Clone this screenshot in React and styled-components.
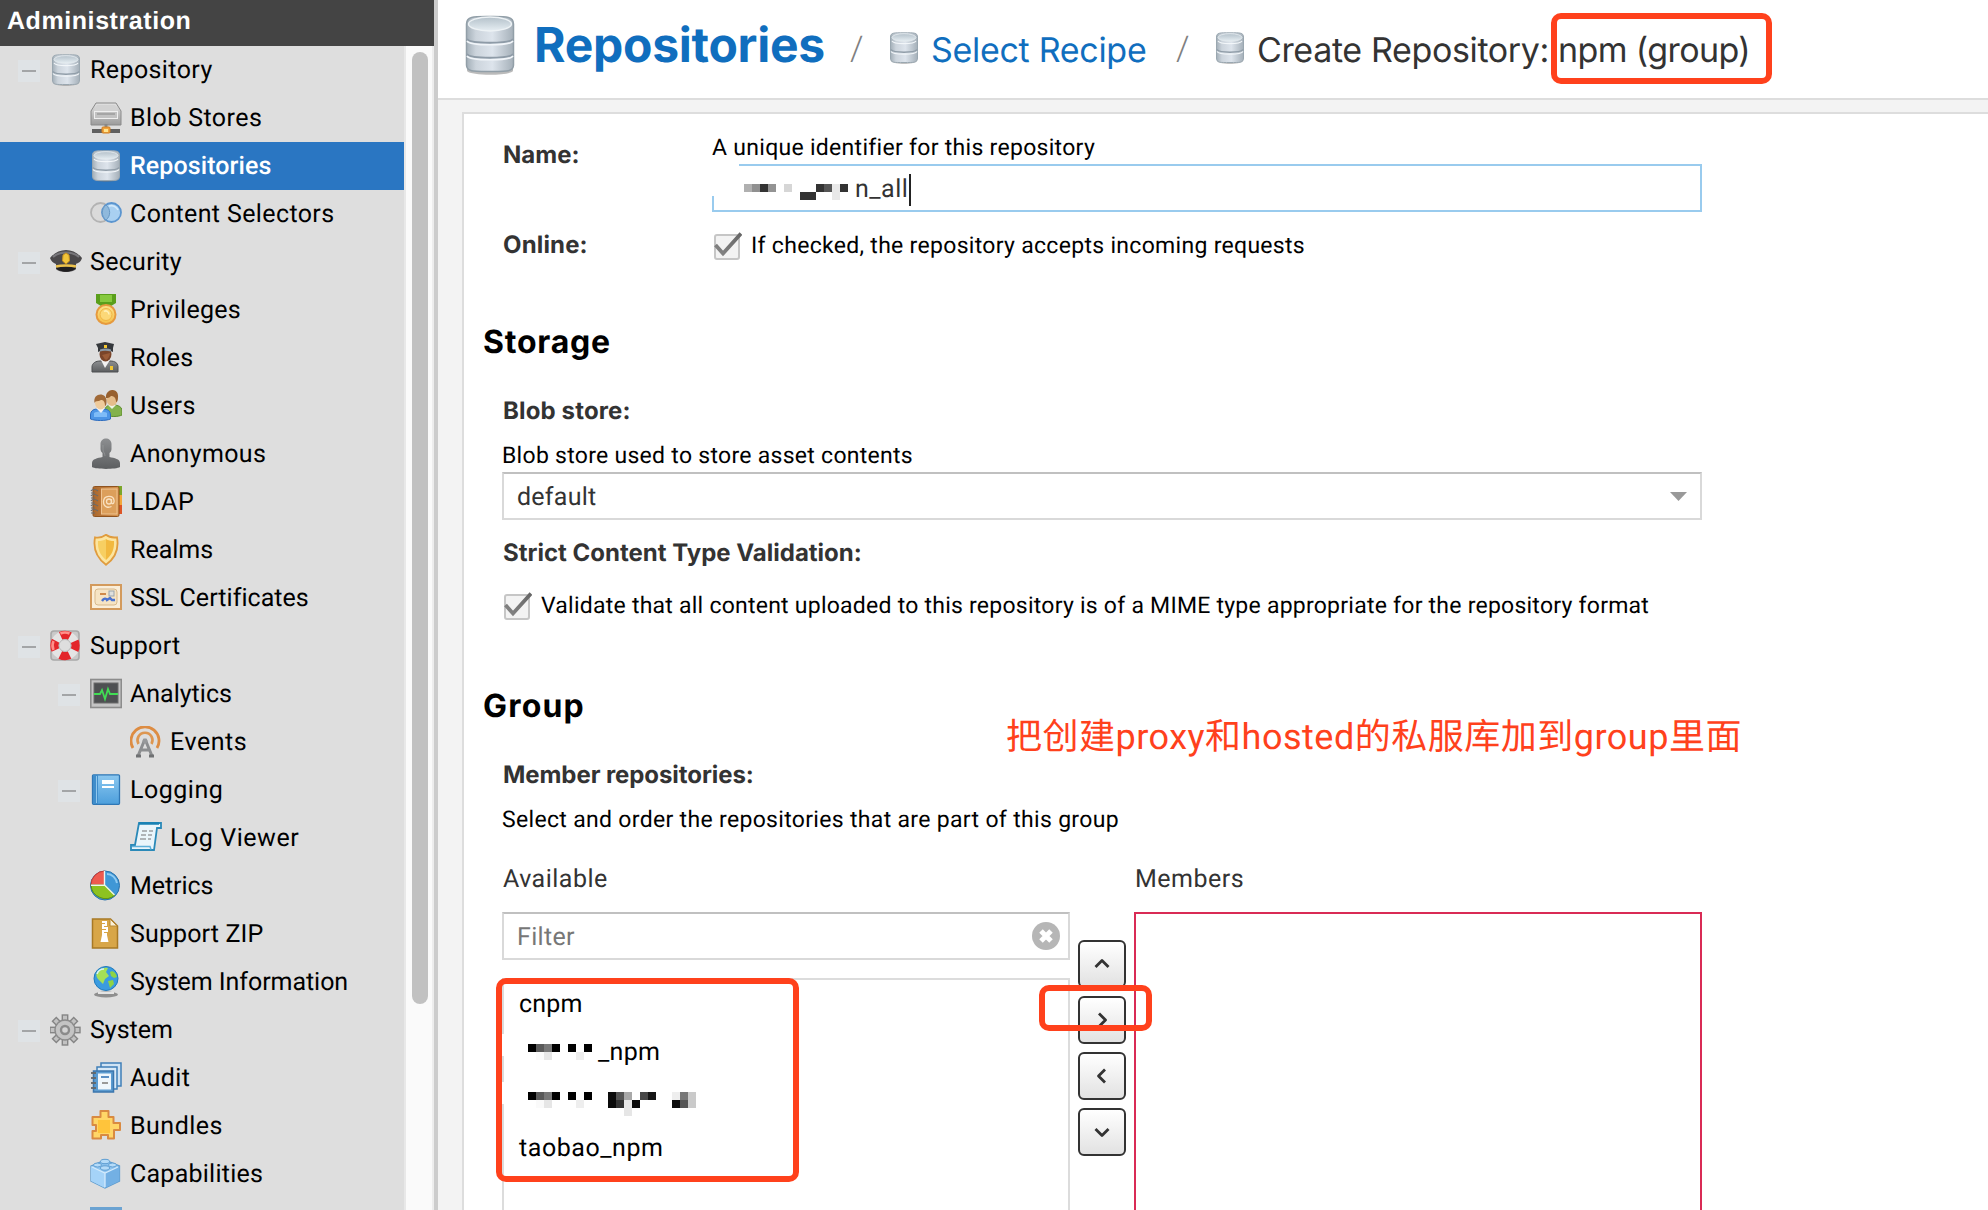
import React from "react";
import styled, { createGlobalStyle } from "styled-components";

const RED = "#ff411c";

const Global = createGlobalStyle`
  html, body { margin: 0; overflow: hidden; }
  *, *::before, *::after { box-sizing: border-box; }
  body {
    font-family: Roboto, "Noto Sans CJK SC", sans-serif;
    text-rendering: geometricPrecision;
    background: #f3f3f3;
    color: #000;
  }
`;

const Page = styled.div`
  position: relative;
  display: flex;
  width: 1988px;
  height: 1210px;
  overflow: hidden;
`;

const Sidebar = styled.nav`
  flex: none;
  width: 438px;
  display: grid;
  grid-template-rows: 46px 1fr;
  border-right: 4px solid #cccccc;
  background: #dedede;
`;
const SidebarHead = styled.header`
  background: #444444;
  color: #fff;
  padding-left: 7px;
  font: 700 25px/43px "Liberation Sans", Arial, sans-serif;
  letter-spacing: 0.57px;
`;
const SidebarBody = styled.div`
  display: flex;
  min-height: 0;
`;
const Tree = styled.ul`
  flex: 1;
  margin: 0;
  padding: 0;
  list-style: none;
  overflow: hidden;
  height: 1164px;
`;
const Node = styled.li`
  display: flex;
  align-items: center;
  height: 48px;
  padding-left: ${(p) => 10 + p.$level * 40}px;
  background: ${(p) => (p.$active ? "#2a76c2" : "transparent")};
  color: ${(p) => (p.$active ? "#fff" : "#000")};
  font-weight: ${(p) => (p.$active ? 500 : 400)};
`;
const Toggle = styled.span`
  width: 22px;
  height: 22px;
  margin: 2px 10px 0 8px;
  display: grid;
  place-items: center;
  background: ${(p) => (p.$open ? "#dfe3e6" : "transparent")};
  &::after {
    content: "";
    width: 14px;
    height: 2px;
    background: ${(p) => (p.$open ? "#a3a5a7" : "transparent")};
  }
`;
const NodeLabel = styled.span`
  margin-left: 8px;
  padding-top: 1px;
  font-size: 25px;
  line-height: 47px;
  letter-spacing: ${(p) => p.$ls}px;
  white-space: nowrap;
`;
const Track = styled.div`
  width: 30px;
  padding: 6px 6px 0;
  background: #fafafa;
  border-left: 2px solid #e8e8e8;
  border-right: 2px solid #ededed;
`;
const Thumb = styled.div`
  width: 16px;
  height: 952px;
  border-radius: 8px;
  background: #c1c1c1;
`;

const Main = styled.main`
  flex: 1;
  min-width: 0;
  display: flex;
  flex-direction: column;
`;
const Crumbs = styled.header`
  flex: none;
  display: flex;
  align-items: flex-start;
  height: 100px;
  padding-left: 20px;
  background: #fff;
  border-bottom: 2px solid #dddddd;
`;
const CrumbIcon = styled.span`
  display: flex;
  margin: ${(p) => (p.$large ? "12px 12px 0 0" : "32px 11px 0 0")};
`;
const Title = styled.h1`
  flex: none;
  width: 316px;
  margin: 13px 0 0;
  color: #106ebe;
  font: 700 48px/64px Inter, sans-serif;
  letter-spacing: -0.26px;
`;
const Slash = styled.span`
  width: 38px;
  margin-top: 25px;
  color: #808080;
  font-size: 34px;
  font-weight: 300;
  line-height: 48px;
`;
const Crumb = styled.span`
  flex: none;
  width: ${(p) => p.$width}px;
  margin-top: 27px;
  color: ${(p) => (p.$link ? "#106ebe" : "#333333")};
  font: 400 34px/48px Inter, sans-serif;
  letter-spacing: ${(p) => p.$ls}px;
  white-space: nowrap;
`;

const Panel = styled.section`
  flex: 1;
  min-height: 0;
  margin: 12px 0 0 24px;
  padding: 20px 0 0 20px;
  background: #fff;
  border: 2px solid #dddddd;
  border-width: 2px 0 0 2px;
`;
const Fields = styled.div`
  display: flow-root;
  width: 1218px;
  padding-left: 18px;
`;
const InlineField = styled.div`
  display: grid;
  grid-template-columns: 210px 1fr;
  align-items: start;
  margin-bottom: 20px;
`;
const Label = styled.div`
  color: #333333;
  font: 700 24px/${(p) => p.$lh || 32}px Inter, sans-serif;
  letter-spacing: ${(p) => p.$ls}px;
  margin-top: ${(p) => p.$mt || 0}px;
  padding-left: 1px;
`;
const Help = styled.div`
  margin: ${(p) => p.$mt || 0}px 0 2px;
  font-size: 23px;
  line-height: 28px;
  letter-spacing: ${(p) => p.$ls}px;
  white-space: nowrap;
`;
const Section = styled.h2`
  margin: ${(p) => p.$mt}px 0 33px -1px;
  font: 700 32px/40px Inter, sans-serif;
  letter-spacing: ${(p) => p.$ls}px;
`;
const Box = styled.div`
  display: flex;
  align-items: center;
  justify-content: space-between;
  height: 48px;
  padding: 0 ${(p) => p.$pr || 12}px 0 13px;
  border: 2px solid #d9d9d9;
  border-top-color: #c0c0c0;
  background: #fff;
  color: #333333;
  font-size: 25px;
`;
const BoxText = styled.span`
  padding-top: 3px;
  color: ${(p) => (p.$muted ? "#777777" : "inherit")};
  letter-spacing: ${(p) => p.$ls}px;
`;
const NameBox = styled(Box)`
  position: relative;
  justify-content: flex-start;
  padding-left: 30px;
  border-color: #99cbee;
  &::before {
    content: "";
    position: absolute;
    left: -2px;
    top: -2px;
    width: 27px;
    height: 32px;
    background: #fff;
  }
`;
const Typed = styled.span`
  margin: 4px 0 0 7px;
  padding-right: 1px;
  line-height: 32px;
  letter-spacing: 0.5px;
  border-right: 2px solid #222;
`;
const CheckRow = styled.div`
  display: flex;
  align-items: flex-start;
  gap: 9px;
  margin-top: ${(p) => p.$mt || 0}px;
  height: 28px;
`;

const Picker = styled.div`
  display: grid;
  grid-template-columns: 568px 48px 568px;
  column-gap: 8px;
  margin-top: 30px;
`;
const Column = styled.div`
  display: flex;
  flex-direction: column;
`;
const ColumnHead = styled.div`
  margin-bottom: 16px;
  padding-left: 1px;
  color: #333333;
  font-size: 25px;
  line-height: 32px;
  letter-spacing: ${(p) => p.$ls}px;
`;
const List = styled.div`
  height: ${(p) => p.$height}px;
  margin-top: ${(p) => p.$mt || 0}px;
  border: 2px solid ${(p) => p.$border};
  border-bottom: 0;
`;
const Item = styled.div`
  position: relative;
  display: flex;
  align-items: center;
  height: 48px;
  padding-left: 15px;
  font-size: 25px;
  letter-spacing: ${(p) => p.$ls}px;
  &::before {
    content: "";
    display: ${(p) => (p.$masked ? "block" : "none")};
    position: absolute;
    left: -2px;
    top: 6px;
    width: 2px;
    height: 22px;
    background: #fff;
  }
`;
const MaskedOwner = styled.span`
  display: flex;
  margin: 0 6px 0 9px;
`;
const MoveButtons = styled.div`
  display: flex;
  flex-direction: column;
  gap: 8px;
  padding-top: 76px;
`;
const MoveButton = styled.button`
  display: grid;
  place-items: center;
  width: 48px;
  height: 48px;
  padding: 0;
  border: 2px solid #333333;
  border-radius: 6px;
  background: linear-gradient(#ffffff, #e2e2e2);
`;

const Marker = styled.div`
  position: absolute;
  left: ${(p) => p.$x}px;
  top: ${(p) => p.$y}px;
  width: ${(p) => p.$w}px;
  height: ${(p) => p.$h}px;
  border: 6px solid ${RED};
  border-radius: 10px;
`;
const Note = styled.div`
  position: absolute;
  left: 1006px;
  top: 712px;
  color: ${RED};
  font-size: 36px;
  line-height: 50px;
  letter-spacing: 0.5px;
  white-space: nowrap;
`;

/* ---------- icons, all on a 32 unit grid ---------- */
const Svg = ({ size = 32, children }) => (
  <svg width={size} height={size} viewBox="0 0 32 32" fill="none">{children}</svg>
);
const Defs = () => (
  <svg width="0" height="0" aria-hidden="true" display="block">
    <defs>
      <linearGradient id="steel"><stop offset="0" stopColor="#a3afb8" /><stop offset=".2" stopColor="#ccd4dc" /><stop offset=".55" stopColor="#dde4ec" /><stop offset="1" stopColor="#a5b0b9" /></linearGradient>
      <linearGradient id="steelTop" x2="0" y2="1"><stop offset="0" stopColor="#b4c1ca" /><stop offset="1" stopColor="#e6eef3" /></linearGradient>
      <linearGradient id="grey" x2="0" y2="1"><stop offset="0" stopColor="#e2e2e2" /><stop offset="1" stopColor="#9b9b9b" /></linearGradient>
      <linearGradient id="dark" x2="0" y2="1"><stop offset="0" stopColor="#8d8f91" /><stop offset="1" stopColor="#5c5e60" /></linearGradient>
      <linearGradient id="gold" x2="0" y2="1"><stop offset="0" stopColor="#fde28a" /><stop offset="1" stopColor="#f5c04a" /></linearGradient>
      <linearGradient id="blue" x2="0" y2="1"><stop offset="0" stopColor="#8cc8f0" /><stop offset="1" stopColor="#4d9fdc" /></linearGradient>
      <linearGradient id="brown"><stop offset="0" stopColor="#a9662c" /><stop offset="1" stopColor="#d8964f" /></linearGradient>
      <linearGradient id="tick" x1="1" x2="0" y2="1"><stop offset="0" stopColor="#666" /><stop offset="1" stopColor="#858585" /></linearGradient>
    </defs>
  </svg>
);
const Database = ({ size }) => (
  <Svg size={size}>
    <path d="M3 27c2 5 24 5 26 0v2c-3 4-23 4-26 0z" fill="#777" opacity=".45" />
    <path d="M2.500 5C2.500 .5 6 .8 16 .8S29.500 .5 29.500 5V26C29.500 31 26 30.500 16 30.500S2.500 31 2.500 26Z" fill="url(#steel)" stroke="#9aa7b0" />
    <path d="M3 17.500c2 3.500 24 3.500 26 0" stroke="#8f9ca7" strokeWidth="1.500" />
    <path d="M3 19.500c2 3.500 24 3.500 26 0" stroke="#f2f6f9" strokeWidth="1.200" />
    <path d="M4 9c2 3.500 22 3.500 24 0" stroke="#f2f6f9" strokeWidth="1.200" />
    <ellipse cx="16" cy="5.500" rx="12" ry="3.800" fill="url(#steelTop)" stroke="#e3eaee" strokeWidth=".8" />
  </Svg>
);
const BigDatabase = () => (
  <svg width="64" height="64" viewBox="0 0 64 64" fill="none">
    <path d="M9 55c3 6 43 6 46 0v4c-4 5-42 5-46 0z" fill="#555" opacity=".4" />
    <path d="M8.500 12C8.500 4 16 4.500 32 4.500S55.500 4 55.500 12V53C55.500 60 48 59.500 32 59.500S8.500 60 8.500 53Z" fill="url(#steel)" stroke="#929fa8" strokeWidth="1.500" />
    <path d="M9 27c3 5 43 5 46 0M9 42c3 5 43 5 46 0" stroke="#8e9ba7" strokeWidth="1.800" />
    <path d="M9 29c3 5 43 5 46 0M9 44c3 5 43 5 46 0" stroke="#f1f5f9" strokeWidth="1.600" />
    <ellipse cx="32" cy="12" rx="21.500" ry="7" fill="url(#steelTop)" stroke="#edf2f5" strokeWidth="1.400" />
  </svg>
);
const BlobStore = () => (
  <Svg>
    <path d="M6 1h20l5 8v14H1V9z" fill="url(#grey)" stroke="#8a8a8a" />
    <path d="M7 3h18l3.500 6h-25z" fill="#d2d2d2" />
    <rect x="4.500" y="9.500" width="23" height="7" fill="#c2c2c2" stroke="#efefef" />
    <path d="M7 12h18" stroke="#888" />
    <path d="M16 22v4" stroke="#888" strokeWidth="3" />
    <path d="M2 29h28" stroke="#606060" strokeWidth="4" />
    <rect x="12" y="25" width="8" height="6" rx="1" fill="#f0a33c" stroke="#cf7e22" />
    <rect x="14" y="27" width="4" height="3" fill="#ffe48f" />
  </Svg>
);
const Selectors = () => (
  <Svg>
    <circle cx="10.500" cy="14.500" r="9.500" fill="#dadada" stroke="#b3b3b3" strokeWidth="1.800" />
    <circle cx="21.500" cy="14.500" r="9.500" fill="#a9d0f1" stroke="#5b95cf" strokeWidth="1.800" />
    <path d="M16 7a9.500 9.500 0 0 1 0 15a9.500 9.500 0 0 1 0-15" fill="#8fb9dc" stroke="#6798c4" />
    <path d="M19 8a8 8 0 0 1 9 4" stroke="#d6ebfb" strokeWidth="1.500" />
  </Svg>
);
const Cap = () => (
  <Svg>
    <path d="M0 12C4 7 10 4 16 4s12 3 16 8c-1 4-4 5-6 6v5c-3 4-17 4-20 0v-5c-3-1-5-3-6-6z" fill="#4a484a" />
    <path d="M3 11c6-6 20-6 26 0" stroke="#77767a" strokeWidth="2" />
    <path d="M6 22c5 5 15 5 20 0-5-2-15-2-20 0z" fill="#1f1e20" />
    <path d="M6 20.500c5-1.500 15-1.500 20 0" stroke="#ecc24c" strokeWidth="2.500" />
    <path d="M13 9l3-2 3 2 .5 6-3.500 3-3.500-3z" fill="#f2c53a" stroke="#c8921e" />
  </Svg>
);
const Medal = () => (
  <Svg>
    <path d="M6 0h20v9l-5 3H11l-5-3z" fill="#5a9f1b" />
    <path d="M10 1h12v7H10z" fill="#86c93e" />
    <circle cx="16" cy="20.500" r="9.500" fill="url(#gold)" stroke="#e69a3e" strokeWidth="2" />
    <circle cx="16" cy="20.500" r="6" stroke="#f0b544" fill="#fcd878" />
    <path d="M14 17.500c2-1.500 5 0 5 3" stroke="#fff0b8" strokeWidth="1.500" />
  </Svg>
);
const Officer = () => (
  <Svg>
    <path d="M2 30v-5c0-4 4-6 8-6h10c5 0 8 2 8 6v5z" fill="url(#dark)" stroke="#4d4f51" />
    <path d="M11 18l4 8 5-8z" fill="#f2f2f2" />
    <ellipse cx="15.500" cy="12" rx="6" ry="7.500" fill="#7a4529" />
    <path d="M12 13c2 2 2 4 4 5 2-1 4-4 4-7z" fill="#9b5c37" />
    <path d="M6 2l9-2 9 2-1 4v4c-4-2-11-2-15 0V6z" fill="#35383c" />
    <path d="M10 7.500c4-1.500 8-1.500 11 0v2c-4-1-8-1-11 0z" fill="#8c9aa5" />
    <path d="M14 3h3v3h-3z" fill="#f4c62f" />
    <path d="M20 24h3v4h-3z" fill="#f0c534" />
  </Svg>
);
const Users = () => (
  <Svg>
    <path d="M15 25v-5c0-4 4-5 7-5s10 0 10 6v4c-4 2-12 2-17 0z" fill="#83b24c" stroke="#5c8d2d" />
    <path d="M18 15l4 4 4-4z" fill="#eef4e5" />
    <ellipse cx="22" cy="9" rx="5.500" ry="7" fill="#e5bd8b" />
    <path d="M16 8c-1-10 13-11 12-1 0 4-1 5-2 5 0-4-2-6-5-6-2 2-3 2-5 2z" fill="#97602f" />
    <path d="M.5 29v-4c0-5 4-6 7-6h6c4 0 7 2 7 6v4c-5 2-15 2-20 0z" fill="#4c95e6" stroke="#2c6bbd" />
    <path d="M4 23c3-2 10-2 13 0v4H4z" fill="#7ebcf8" />
    <path d="M6 18l5 5 4-5z" fill="#f4f4f4" />
    <ellipse cx="10.500" cy="13" rx="5.500" ry="6.500" fill="#efcb9c" />
    <path d="M4.500 13c-2-11 13-11 12-1 0 3-1 4-1.500 4 0-5-2-6-4-6-3 2-5 0-6.500 3z" fill="#a16a38" />
  </Svg>
);
const Silhouette = () => (
  <Svg>
    <path d="M10.500 6c0-7.500 11-7.500 11 0v5c0 2-1 3-2 4v4c5 1 10.500 2 10.500 6v4c-4 2.500-24 2.500-28 0v-4c0-4 5.500-5 10.500-6v-4c-1-1-2-2-2-4z" fill="url(#dark)" />
    <path d="M13 7v5c0 2 2 3 2 6" stroke="#a5a7a9" opacity=".5" />
  </Svg>
);
const AddressBook = () => (
  <Svg>
    <path d="M27 0h5v9h-5z" fill="#7ba629" /><path d="M27 9h5v10h-5z" fill="#f3a73a" /><path d="M27 19h5v9h-5z" fill="#dd5526" />
    <rect x="3" y=".5" width="26" height="30" rx="1.500" fill="url(#brown)" stroke="#8f531f" />
    <rect x="11.500" y="3" width="15.500" height="25" fill="#dc9f5b" stroke="#efc391" />
    <circle cx="19" cy="15.500" r="2.500" stroke="#f9e1c1" strokeWidth="1.300" />
    <path d="M21.500 13v4c2 2 3-1 2.500-3-1-5-10-5-10.500 1.500 0 6 5 6.500 8 5" stroke="#f9e1c1" strokeWidth="1.300" />
    {[4, 9, 14, 19, 24].map((y) => <path key={y} d={`M1 ${y + 1}c1-2 5-2 7 0M1 ${y + 3}h4`} stroke="#6a6a6a" strokeWidth="1.200" />)}
  </Svg>
);
const Shield = () => (
  <Svg>
    <path d="M16 .8c3 2.500 7 3 11 2.500 2 11-2 21-11 27.500C7 24 3 14 5 3.300 9 4 13 3 16 .8z" fill="#fce5a0" stroke="#e09c3e" strokeWidth="1.800" />
    <path d="M16 5c2 1.500 5 2 8 2 .5 8-2 14-8 19z" fill="#f2b93f" /><path d="M16 5C14 6.500 11 7 8 7c-.5 8 2 14 8 19z" fill="#f7cf62" />
  </Svg>
);
const Certificate = () => (
  <Svg>
    <rect x="1" y="3" width="30" height="24" fill="#faeed9" stroke="#d39a5c" strokeWidth="2" />
    <rect x="5" y="7" width="22" height="16" rx="3" fill="#f6e4c4" stroke="#d8b98c" />
    <path d="M10 12h6" stroke="#d08a4a" strokeWidth="2" />
    <rect x="19" y="9" width="5" height="5" fill="#dfe0dd" stroke="#9aa5ad" />
    <path d="M12 19c2-3 4-3 5-1l3-2 2 2h3" stroke="#4a72cf" strokeWidth="2.400" />
  </Svg>
);
const Lifebuoy = () => (
  <Svg>
    <rect x="1" y="1" width="28" height="29" rx="3" stroke="#a9a9a9" strokeWidth="1.600" fill="#c9c9c9" />
    <circle cx="15" cy="15.500" r="10.500" stroke="#e4e4e4" strokeWidth="8" />
    <circle cx="15" cy="15.500" r="10.500" stroke="#e3262b" strokeWidth="8.500" strokeDasharray="9.500 6.993" strokeDashoffset="4.750" />
    <path d="M10.500 3.500q4.500-2 9 0M3.500 11q-2 4.500 0 9" stroke="#ff8f8a" strokeWidth="2.500" />
    <circle cx="15" cy="15.500" r="6" fill="#dedede" stroke="#bbb" />
  </Svg>
);
const Monitor = () => (
  <Svg>
    <rect x=".8" y="1.500" width="30.500" height="28" fill="#c4c4c4" stroke="#8c8c8c" strokeWidth="1.600" />
    <rect x="4" y="5" width="24" height="20" fill="#4e5052" stroke="#6b6b6b" />
    <path d="M4 16h6l2-4 3 9 3-10 2 5h8" stroke="#41dd54" strokeWidth="1.800" />
  </Svg>
);
const Antenna = () => (
  <Svg>
    <path d="M3 22a14 14 0 1 1 24 0" stroke="#dd8c42" strokeWidth="2.800" />
    <path d="M8.500 18a7.500 7.500 0 1 1 13 0" stroke="#dd9650" strokeWidth="2.600" />
    <path d="M15 13l-7 17M15 13l7 17M11 24h8" stroke="#8c8e90" strokeWidth="3" />
    <path d="M6 30h5M19 30h5" stroke="#6f7173" strokeWidth="3" />
    <circle cx="15" cy="15" r="2.500" fill="#97999b" />
  </Svg>
);
const Book = () => (
  <Svg>
    <rect x="2.500" y=".8" width="27" height="29.500" rx="1" fill="url(#blue)" stroke="#2f77b5" strokeWidth="1.300" />
    <path d="M3 1h5v29H3z" fill="#3f8dcb" /><path d="M6.500 2v27" stroke="#90c8ee" />
    <path d="M12 6h12v4H12z" fill="#fff" /><path d="M12 13h12" stroke="#fff" strokeWidth="2" />
  </Svg>
);
const Scroll = () => (
  <Svg>
    <path d="M9 1h22v5h-4l-3 22H1v-5h4z" fill="#eaf5fb" stroke="#2a89b8" strokeWidth="1.800" />
    <path d="M9 1.500h20" stroke="#1982b5" strokeWidth="2.500" />
    <path d="M2 24.500h18l1 3" stroke="#5fb1da" strokeWidth="1.500" />
    <path d="M12 9h5m2 0h4M11 13h5m2 0h4M10 17h6m2 0h3" stroke="#9c9fa2" strokeWidth="1.500" />
  </Svg>
);
const Pie = () => (
  <Svg>
    <circle cx="15" cy="15.500" r="14.500" fill="#3f97d6" stroke="#2a72ab" />
    <path d="M14.500 15V1A14 14 0 0 0 1 15z" fill="#ee5a4f" stroke="#c93932" />
    <path d="M1 15h14l10 10A14.500 14.500 0 0 1 1 15z" fill="#8dc220" stroke="#5d920f" />
    <path d="M14.500 1v14l10 10M1 15.200h14" stroke="#f0f6ee" strokeWidth="1.400" />
    <path d="M17 4c5 0 9 4 10 9" stroke="#8fcbf3" strokeWidth="2" />
  </Svg>
);
const Zip = () => (
  <Svg>
    <path d="M2.500 1h18l7 7v22h-25z" fill="#d8a648" stroke="#a87924" strokeWidth="1.500" />
    <path d="M20 1v7h7z" fill="#faf0d8" stroke="#b98a38" />
    <path d="M12 4h4v3h-3v3h4v3h-4v3h4" stroke="#fff" strokeWidth="2" />
    <path d="M12.500 15h4l2 9h-8z" fill="#fff" />
  </Svg>
);
const Globe = () => (
  <Svg>
    <ellipse cx="16" cy="28.500" rx="12" ry="3" fill="#8f8f8f" /><path d="M8 27h16" stroke="#eee" strokeWidth="1.800" />
    <circle cx="16" cy="12.500" r="12" fill="#3a9be0" stroke="#1f79bb" />
    <path d="M7 6c3-4 8-5 11-4l-2 4 3 4-4 3-2 5-5-5c-2-2-2-5-1-7z" fill="#a5e056" />
    <path d="M20 6c3-2 6 1 7 5l-3 1-3-2zM18 15l5-1 1 4-4 4z" fill="#8fd444" />
    <path d="M7 8c1-3 4-5 7-5" stroke="#d5f3fb" strokeWidth="1.500" />
  </Svg>
);
const Gear = () => (
  <Svg>
    {[0, 45, 90, 135, 180, 225, 270, 315].map((a) => <rect key={a} x="12.300" y="1" width="5.400" height="7" fill="#c2c2c2" stroke="#858585" strokeWidth="1.400" transform={`rotate(${a} 15 16)`} />)}
    <circle cx="15" cy="16" r="10" fill="#bdbdbd" stroke="#8b8b8b" strokeWidth="1.400" />
    <circle cx="15" cy="16" r="9" fill="#c4c4c4" />
    <circle cx="15" cy="16" r="4" fill="#d4d4d4" stroke="#8b8b8b" strokeWidth="2.400" />
  </Svg>
);
const Audit = () => (
  <Svg>
    <rect x="11" y="1" width="20" height="23" fill="#cfe3f4" stroke="#3f7fb8" strokeWidth="1.500" />
    <rect x="7" y="5" width="20" height="22" fill="#d8e9f7" stroke="#3f7fb8" strokeWidth="1.500" />
    <rect x="3.500" y="9" width="20" height="21" fill="#5b9bd0" stroke="#3b76ad" strokeWidth="1.500" />
    <rect x="8" y="11.500" width="13" height="16" fill="#eff6fc" />
    <path d="M11 15h8" stroke="#5b8fc4" strokeWidth="2" /><path d="M12 21h6" stroke="#999" strokeWidth="2" />
    {[11, 16, 21, 26].map((y) => <path key={y} d={`M1 ${y}h5`} stroke="#666" strokeWidth="1.800" />)}
  </Svg>
);
const Puzzle = () => (
  <Svg>
    <path d="M2.500 7h8V1h8v6h5v6h6.500v7H24v8.500h-6V25h-7v3.500H2.500V21H6v-6H2.500z" fill="#ffd667" stroke="#d98a41" strokeWidth="2" strokeLinejoin="round" />
    <path d="M8 10h12v13H8z" fill="#ffc43b" />
  </Svg>
);
const Brick = () => (
  <Svg>
    <path d="M1 8l14-6 14.500 6v15L15 30 1 23z" fill="#8fc4ef" stroke="#5e9bcd" strokeWidth="1.300" />
    <path d="M1 8l14 7v15L1 23z" fill="#a5d3f8" /><path d="M29.500 8L15 15v15l14.500-7z" fill="#73b0e4" />
    <path d="M2 9l13 6 13-6M15 15v14" stroke="#d3eafc" strokeWidth="1.300" />
    <ellipse cx="15" cy="3.500" rx="4.500" ry="2.200" fill="#b5dbf8" stroke="#5f9ed2" /><ellipse cx="15" cy="10" rx="4.500" ry="2.200" fill="#b5dbf8" stroke="#5f9ed2" />
    <ellipse cx="7.500" cy="7" rx="4" ry="2" fill="#b5dbf8" stroke="#5f9ed2" /><ellipse cx="22.500" cy="7" rx="4" ry="2" fill="#b5dbf8" stroke="#5f9ed2" />
  </Svg>
);
const Window = () => (
  <Svg><rect x="0" y="1.500" width="32" height="28" fill="#c9def0" /><path d="M0 3h32" stroke="#6ba3d2" strokeWidth="4" /></Svg>
);
const Checkbox = () => (
  <svg width="30" height="28" viewBox="0 0 30 28" fill="none">
    <rect x="3" y="3" width="24" height="24" rx="2" fill="#f3f3f3" stroke="#c6c6c6" strokeWidth="2" />
    <path d="M3.500 13l7.500 8.500L29 1.500" stroke="url(#tick)" strokeWidth="3.800" />
  </svg>
);
const Caret = () => (
  <svg width="17" height="9" viewBox="0 0 17 9"><path d="M0 0h17l-8.500 9z" fill="#999" /></svg>
);
const Clear = () => (
  <svg width="28" height="28" viewBox="0 0 28 28"><circle cx="14" cy="14" r="14" fill="#b6b6b6" /><path d="M9 9l10 10M19 9L9 19" stroke="#fff" strokeWidth="5" /></svg>
);
const Chevron = ({ turn }) => (
  <svg width="20" height="20" viewBox="0 0 20 20" fill="none"><path d="M3.500 13L10 6.500l6.500 6.500" stroke="#333" strokeWidth="2.800" strokeLinejoin="round" transform={`rotate(${turn} 10 10)`} /></svg>
);
/* Pixelated redaction: cells are [column, row, shade] in 8px blocks. */
const Redaction = ({ cols, rows, cells }) => (
  <svg width={cols * 8} height={rows * 8} viewBox={`0 0 ${cols} ${rows}`} shapeRendering="crispEdges">
    {cells.map(([x, y, c]) => <rect key={`${x}-${y}`} x={x} y={y} width="1" height="1" fill={c} />)}
  </svg>
);

const OWNER = [[0, 1, "#000"], [1, 1, "#595959"], [2, 1, "#777"], [3, 1, "#000"], [5, 1, "#000"], [7, 1, "#000"], [1, 2, "#fafafa"], [2, 2, "#e6e6e6"], [6, 2, "#eee"]];
const HIDDEN = [...OWNER, [10, 1, "#0d0d0d"], [11, 1, "#555"], [12, 1, "#a8a8a8"], [14, 1, "#484848"], [15, 1, "#161616"], [10, 2, "#0a0a0a"], [11, 2, "#333"], [12, 2, "#e6e6e6"], [13, 2, "#0a0a0a"], [12, 3, "#e6e6e6"], [18, 1, "#eee"], [19, 1, "#777"], [20, 1, "#cacaca"], [18, 2, "#0d0d0d"], [19, 2, "#555"], [20, 2, "#cacaca"]];
const NAME = [[0, 1, "#b0b0b0"], [1, 1, "#909090"], [2, 1, "#333"], [3, 1, "#939393"], [5, 1, "#d6d6d6"], [7, 2, "#333"], [8, 2, "#333"], [9, 1, "#333"], [10, 1, "#555"], [11, 1, "#e8e8e8"], [11, 2, "#e8e8e8"], [12, 1, "#333"]];

/* level, label, icon, letter spacing, expanded */
const TREE = [
  [0, "Repository", Database, 0.4, true],
  [1, "Blob Stores", BlobStore, 0.42],
  [1, "Repositories", Database, 0.1],
  [1, "Content Selectors", Selectors, 0.38],
  [0, "Security", Cap, 0.3, true],
  [1, "Privileges", Medal, 0.3],
  [1, "Roles", Officer, 0.3],
  [1, "Users", Users, 0.4],
  [1, "Anonymous", Silhouette, 0.38],
  [1, "LDAP", AddressBook, 0.7],
  [1, "Realms", Shield, 0],
  [1, "SSL Certificates", Certificate, 0.05],
  [0, "Support", Lifebuoy, 0.34, true],
  [1, "Analytics", Monitor, 0, true],
  [2, "Events", Antenna, 0.55],
  [1, "Logging", Book, 0.5, true],
  [2, "Log Viewer", Scroll, 0.55],
  [1, "Metrics", Pie, -0.05],
  [1, "Support ZIP", Zip, 0.13],
  [1, "System Information", Globe, -0.05],
  [0, "System", Gear, 0, true],
  [1, "Audit", Audit, 0.4],
  [1, "Bundles", Puzzle, 0.5],
  [1, "Capabilities", Brick, 0.25],
  [1, "", Window, 0],
];

export default function App() {
  return (
    <Page>
      <Global />
      <Sidebar>
        <SidebarHead>Administration</SidebarHead>
        <SidebarBody>
          <Tree>
            {TREE.map(([level, label, Icon, ls, open]) => (
              <Node key={label || "next"} $level={level} $active={label === "Repositories"}>
                <Toggle $open={open} />
                <Icon />
                <NodeLabel $ls={ls}>{label}</NodeLabel>
              </Node>
            ))}
          </Tree>
          <Track><Thumb /></Track>
        </SidebarBody>
      </Sidebar>
      <Main>
        <Crumbs>
          <CrumbIcon $large><BigDatabase /></CrumbIcon>
          <Title>Repositories</Title>
          <Slash>/</Slash>
          <CrumbIcon><Database /></CrumbIcon>
          <Crumb $link $width={245} $ls={-0.3}>Select Recipe</Crumb>
          <Slash>/</Slash>
          <CrumbIcon><Database /></CrumbIcon>
          <Crumb $width={301} $ls={-0.36}>Create Repository:</Crumb>
          <Crumb $width={200} $ls={-0.6}>npm (group)</Crumb>
        </Crumbs>
        <Panel>
          <Fields>
            <InlineField>
              <Label $mt={5} $ls={0.02}>Name:</Label>
              <div>
                <Help $ls={0.29}>A unique identifier for this repository</Help>
                <NameBox>
                  <Redaction cols={13} rows={3} cells={NAME} />
                  <Typed>n_all</Typed>
                </NameBox>
              </div>
            </InlineField>
            <InlineField>
              <Label $lh={26} $ls={0.15}>Online:</Label>
              <CheckRow>
                <Checkbox />
                <Help $ls={0.3}>If checked, the repository accepts incoming requests</Help>
              </CheckRow>
            </InlineField>
          </Fields>
          <Section $mt={42} $ls={0.77}>Storage</Section>
          <Fields>
            <Label $ls={0.14}>Blob store:</Label>
            <Help $mt={15} $ls={0.28}>Blob store used to store asset contents</Help>
            <Box $pr={13}><BoxText $ls={0.25}>default</BoxText><Caret /></Box>
            <Label $mt={17} $ls={0}>Strict Content Type Validation:</Label>
            <CheckRow $mt={23}>
              <Checkbox />
              <Help $ls={0.24}>Validate that all content uploaded to this repository is of a MIME type appropriate for the repository format</Help>
            </CheckRow>
          </Fields>
          <Section $mt={66} $ls={1.2}>Group</Section>
          <Fields>
            <Label $ls={-0.07}>Member repositories:</Label>
            <Help $mt={15} $ls={0.32}>Select and order the repositories that are part of this group</Help>
            <Picker>
              <Column>
                <ColumnHead $ls={0.49}>Available</ColumnHead>
                <Box $pr={8}><BoxText $muted $ls={0.32}>Filter</BoxText><Clear /></Box>
                <List $mt={18} $height={240} $border="#dcdcdc">
                  <Item $ls={0.19}>cnpm</Item>
                  <Item $masked $ls={0.29}>
                    <MaskedOwner><Redaction cols={8} rows={4} cells={OWNER} /></MaskedOwner>
                    _npm
                  </Item>
                  <Item $masked>
                    <MaskedOwner><Redaction cols={21} rows={4} cells={HIDDEN} /></MaskedOwner>
                  </Item>
                  <Item $ls={0.55}>taobao_npm</Item>
                </List>
              </Column>
              <MoveButtons>
                {[0, 90, 270, 180].map((turn) => <MoveButton key={turn}><Chevron turn={turn} /></MoveButton>)}
              </MoveButtons>
              <Column>
                <ColumnHead $ls={0.5}>Members</ColumnHead>
                <List $height={310} $border="#d92b55" />
              </Column>
            </Picker>
          </Fields>
        </Panel>
      </Main>
      <Marker $x={1551} $y={13} $w={221} $h={71} />
      <Marker $x={496} $y={978} $w={303} $h={204} />
      <Marker $x={1039} $y={985} $w={113} $h={46} />
      <Note>把创建proxy和hosted的私服库加到group里面</Note>
      <Defs />
    </Page>
  );
}
